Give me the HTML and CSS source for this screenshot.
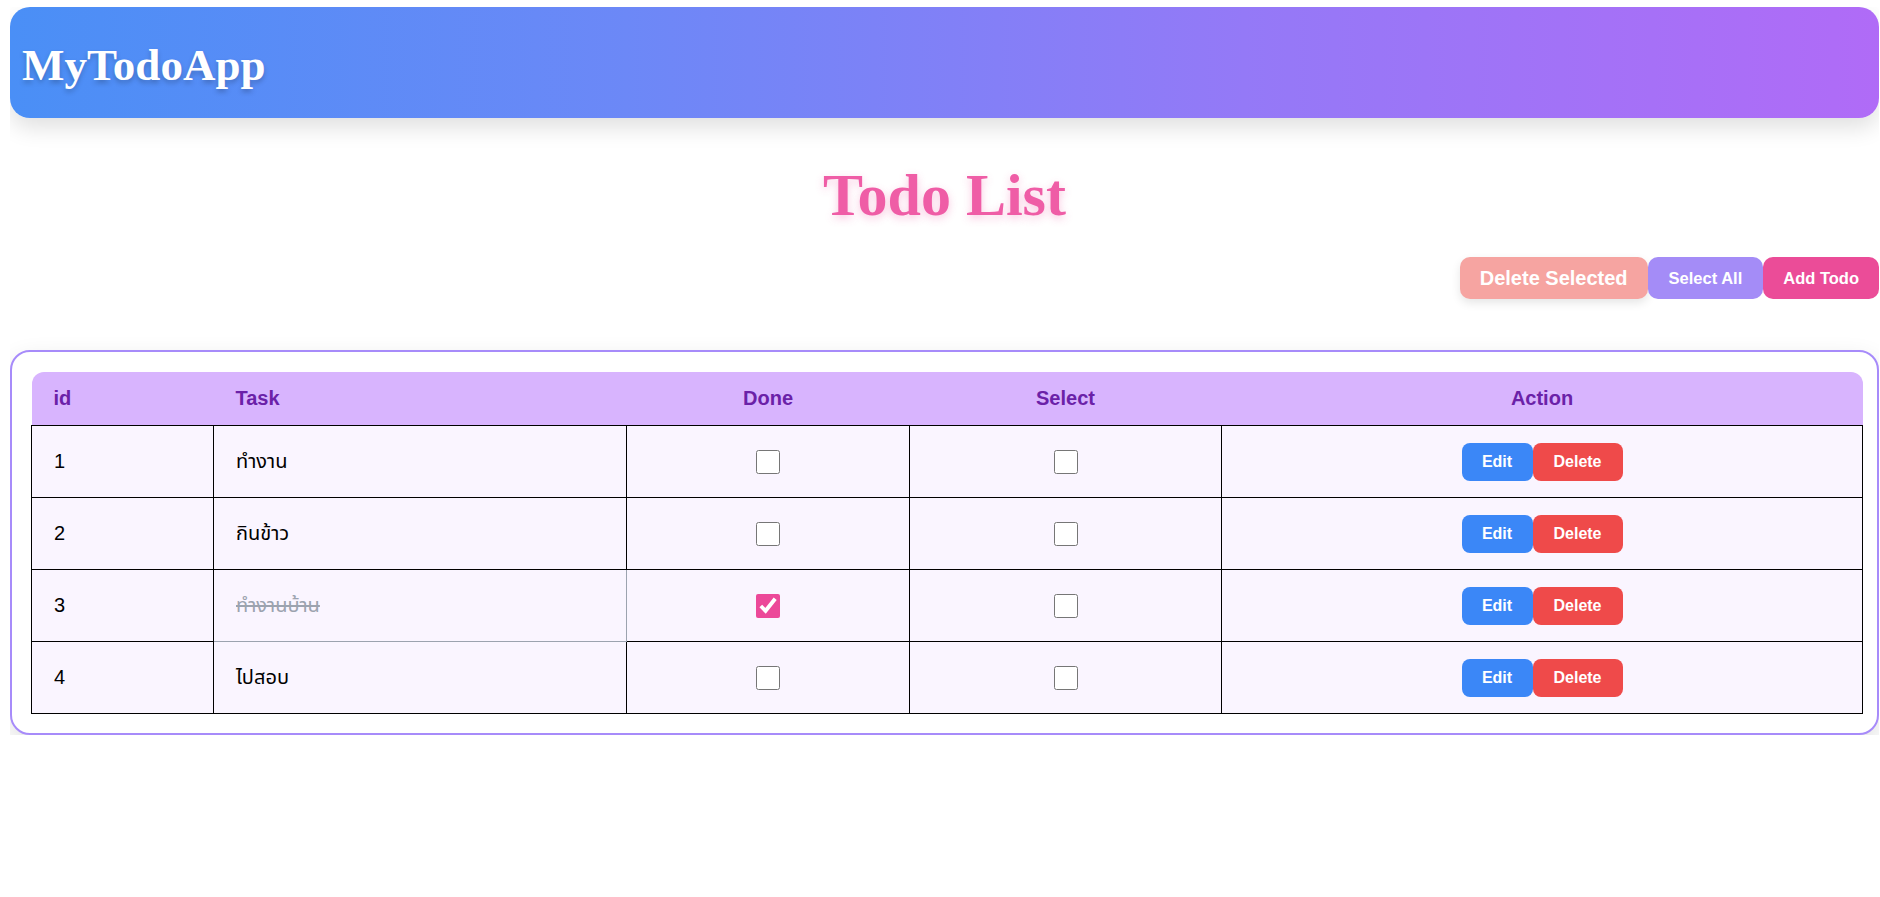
FILE: index.html
```html
<!DOCTYPE html>
<html lang="th">
<head>
<meta charset="utf-8">
<title>MyTodoApp</title>
<link rel="stylesheet" href="styles.css">
</head>
<body>
<header class="app-header">
  <h1 class="brand">MyTodoApp</h1>
</header>
<main class="page">
  <h2 class="page-title">Todo List</h2>
  <div class="toolbar">
    <button class="btn btn-delete-selected">Delete Selected</button>
    <button class="btn btn-select-all">Select All</button>
    <button class="btn btn-add">Add Todo</button>
  </div>
  <section class="card">
    <table class="todo-table">
      <colgroup>
        <col class="c-id"><col class="c-task"><col class="c-done"><col class="c-select"><col>
      </colgroup>
      <thead>
        <tr>
          <th class="left">id</th>
          <th class="left">Task</th>
          <th>Done</th>
          <th>Select</th>
          <th>Action</th>
        </tr>
      </thead>
      <tbody>
        <tr>
          <td>1</td>
          <td class="task">ทำงาน</td>
          <td class="center"><input type="checkbox" class="check"></td>
          <td class="center"><input type="checkbox" class="check"></td>
          <td class="center"><div class="actions"><button class="sbtn edit">Edit</button><button class="sbtn del">Delete</button></div></td>
        </tr>
        <tr>
          <td>2</td>
          <td class="task">กินข้าว</td>
          <td class="center"><input type="checkbox" class="check"></td>
          <td class="center"><input type="checkbox" class="check"></td>
          <td class="center"><div class="actions"><button class="sbtn edit">Edit</button><button class="sbtn del">Delete</button></div></td>
        </tr>
        <tr>
          <td>3</td>
          <td class="task done">ทำงานบ้าน</td>
          <td class="center"><input type="checkbox" class="check" checked></td>
          <td class="center"><input type="checkbox" class="check"></td>
          <td class="center"><div class="actions"><button class="sbtn edit">Edit</button><button class="sbtn del">Delete</button></div></td>
        </tr>
        <tr>
          <td>4</td>
          <td class="task">ไปสอบ</td>
          <td class="center"><input type="checkbox" class="check"></td>
          <td class="center"><input type="checkbox" class="check"></td>
          <td class="center"><div class="actions"><button class="sbtn edit">Edit</button><button class="sbtn del">Delete</button></div></td>
        </tr>
      </tbody>
    </table>
  </section>
</main>
</body>
</html>
```
FILE: styles.css
```css
html, body {
  background: #ffffff;
}
body {
  margin: 7px 1px 0 10px;
  font-family: "Liberation Sans", "Noto Sans Thai", "Loma", "Garuda", "Tahoma", Arial, sans-serif;
  color: #000;
}

.app-header {
  height: 111px;
  box-sizing: border-box;
  border-radius: 20px;
  background: linear-gradient(to right, #4a8ff6 0%, #6c88f7 33%, #9479f7 66%, #b06bf7 100%);
  box-shadow: 0 10px 22px rgba(0, 0, 0, 0.12);
  display: flex;
  align-items: center;
  padding: 0 12px;
}
.brand {
  margin: 0;
  font-family: "Liberation Serif", "Times New Roman", serif;
  font-weight: 700;
  font-size: 45px;
  color: #ffffff;
  text-shadow: 0 3px 5px rgba(0, 0, 0, 0.22);
  position: relative;
  top: 2px;
}

.page {
  display: flex;
  flex-direction: column;
}
.page-title {
  margin: 44px 0 0;
  text-align: center;
  font-family: "Liberation Serif", "Times New Roman", serif;
  font-weight: 700;
  font-size: 60px;
  line-height: 66px;
  color: #ef5da6;
  text-shadow: 0 3px 8px rgba(236, 72, 153, 0.30);
}

.toolbar {
  margin-top: 29px;
  display: flex;
  justify-content: flex-end;
}
.btn {
  height: 42px;
  border: none;
  border-radius: 10px;
  color: #fff;
  font-family: "Liberation Sans", Arial, sans-serif;
  font-weight: 700;
  font-size: 16.5px;
  padding: 0 20px;
  white-space: nowrap;
  flex: none;
  cursor: pointer;
}
.btn-delete-selected {
  background: #f6a4a1;
  font-size: 20px;
  padding: 0 20px;
  box-shadow: 0 4px 10px rgba(0, 0, 0, 0.10);
}
.btn-select-all {
  background: #a48cf7;
  padding: 0 21px;
}
.btn-add {
  background: #eb4c98;
  padding: 0 20px;
}

.card {
  margin-top: 51px;
  border: 2px solid #a78bfa;
  border-radius: 20px;
  background: #fff;
  padding: 20px 14px 19px 19px;
  box-shadow: 0 10px 26px rgba(0, 0, 0, 0.12);
}

.todo-table {
  width: 100%;
  border-collapse: collapse;
  table-layout: fixed;
  font-size: 20px;
}
.c-id { width: 182px; }
.c-task { width: 413px; }
.c-done { width: 283px; }
.c-select { width: 312px; }

.todo-table th {
  background: #d8b4fe;
  color: #6b21a8;
  font-weight: 700;
  height: 53px;
  padding: 0 22px;
  text-align: center;
}
.todo-table th.left {
  text-align: left;
}
.todo-table th:first-child {
  border-top-left-radius: 12px;
}
.todo-table th:last-child {
  border-top-right-radius: 12px;
}

.todo-table td {
  background: #faf5ff;
  border: 1px solid #000;
  height: 71px;
  padding: 0 22px;
  color: #000;
}
.todo-table td.center {
  text-align: center;
}
.todo-table td.task.done {
  color: #9ca3af;
  text-decoration: line-through;
  border-color: #9ca3af;
}

.check {
  width: 24px;
  height: 24px;
  margin: 0;
  vertical-align: middle;
  accent-color: #ec4899;
}

.actions {
  display: inline-flex;
}
.sbtn {
  height: 38px;
  border: none;
  border-radius: 8px;
  color: #fff;
  font-family: "Liberation Sans", Arial, sans-serif;
  font-weight: 700;
  font-size: 16px;
  padding: 0 20px;
  cursor: pointer;
}
.sbtn.edit {
  background: #3b87f7;
  width: 71px;
}
.sbtn.del {
  background: #ef4a4a;
  width: 90px;
}
```
